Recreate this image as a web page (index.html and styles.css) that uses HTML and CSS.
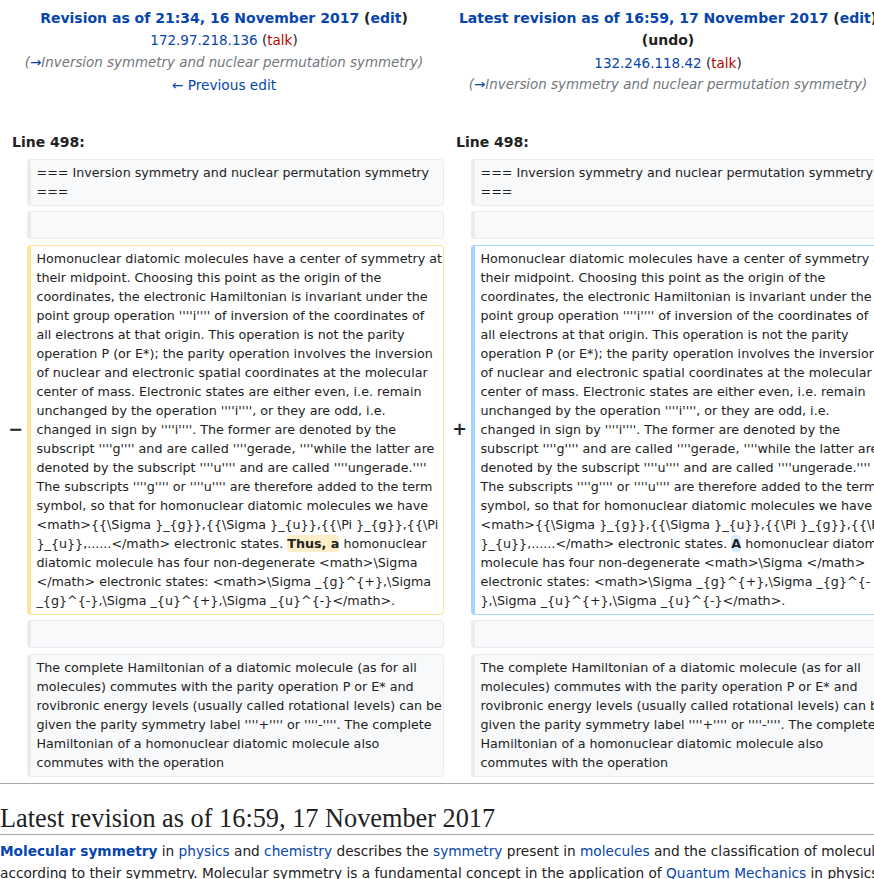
FILE: index.html
```html
<!DOCTYPE html>
<html lang="en">
<head>
<meta charset="utf-8">
<title>Molecular symmetry: Difference between revisions</title>
<link rel="stylesheet" href="styles.css">
</head>
<body>
<div class="page">
  <div class="diff">
    <div class="title">
      <div class="t1"><strong><a href="#">Revision as of 21:34, 16 November 2017</a> <span class="tool">(<a href="#">edit</a>)</span></strong></div>
      <div class="t2"><a href="#">172.97.218.136</a> <span class="paren">(<a class="new" href="#">talk</a>)</span></div>
      <div class="t3"><span class="comment">(<a href="#" class="arrow">→</a>Inversion symmetry and nuclear permutation symmetry)</span></div>
      <div class="t4"><a href="#">← Previous edit</a></div>
    </div>
    <div class="title">
      <div class="t1"><strong><a href="#">Latest revision as of 16:59, 17 November 2017</a> <span class="tool">(<a href="#">edit</a>)</span> <span class="tool">(<a href="#" class="undo">undo</a>)</span></strong></div>
      <div class="t2"><a href="#">132.246.118.42</a> <span class="paren">(<a class="new" href="#">talk</a>)</span></div>
      <div class="t3"><span class="comment">(<a href="#" class="arrow">→</a>Inversion symmetry and nuclear permutation symmetry)</span></div>
    </div>

    <div class="lineno">Line 498:</div>
    <div class="lineno">Line 498:</div>

    <div class="marker"></div>
    <div class="line context">=== Inversion symmetry and nuclear permutation symmetry<br>===</div>
    <div class="marker"></div>
    <div class="line context">=== Inversion symmetry and nuclear permutation symmetry<br>===</div>

    <div class="marker"></div>
    <div class="line context empty"></div>
    <div class="marker"></div>
    <div class="line context empty"></div>

    <div class="marker">−</div>
    <div class="line deleted">Homonuclear diatomic molecules have a center of symmetry at<br>their midpoint. Choosing this point as the origin of the<br>coordinates, the electronic Hamiltonian is invariant under the<br>point group operation ''''i'''' of inversion of the coordinates of<br>all electrons at that origin. This operation is not the parity<br>operation P (or E*); the parity operation involves the inversion<br>of nuclear and electronic spatial coordinates at the molecular<br>center of mass. Electronic states are either even, i.e. remain<br>unchanged by the operation ''''i'''', or they are odd, i.e.<br>changed in sign by ''''i''''. The former are denoted by the<br>subscript ''''g'''' and are called ''''gerade, ''''while the latter are<br>denoted by the subscript ''''u'''' and are called ''''ungerade.''''<br>The subscripts ''''g'''' or ''''u'''' are therefore added to the term<br>symbol, so that for homonuclear diatomic molecules we have<br>&lt;math&gt;{{\Sigma }_{g}},{{\Sigma }_{u}},{{\Pi }_{g}},{{\Pi<br>}_{u}},......&lt;/math&gt; electronic states. <span class="diffchange">Thus, a</span> homonuclear<br>diatomic molecule has four non-degenerate &lt;math&gt;\Sigma<br>&lt;/math&gt; electronic states: &lt;math&gt;\Sigma _{g}^{+},\Sigma<br>_{g}^{-},\Sigma _{u}^{+},\Sigma _{u}^{-}&lt;/math&gt;.</div>
    <div class="marker">+</div>
    <div class="line added">Homonuclear diatomic molecules have a center of symmetry at<br>their midpoint. Choosing this point as the origin of the<br>coordinates, the electronic Hamiltonian is invariant under the<br>point group operation ''''i'''' of inversion of the coordinates of<br>all electrons at that origin. This operation is not the parity<br>operation P (or E*); the parity operation involves the inversion<br>of nuclear and electronic spatial coordinates at the molecular<br>center of mass. Electronic states are either even, i.e. remain<br>unchanged by the operation ''''i'''', or they are odd, i.e.<br>changed in sign by ''''i''''. The former are denoted by the<br>subscript ''''g'''' and are called ''''gerade, ''''while the latter are<br>denoted by the subscript ''''u'''' and are called ''''ungerade.''''<br>The subscripts ''''g'''' or ''''u'''' are therefore added to the term<br>symbol, so that for homonuclear diatomic molecules we have<br>&lt;math&gt;{{\Sigma }_{g}},{{\Sigma }_{u}},{{\Pi }_{g}},{{\Pi<br>}_{u}},......&lt;/math&gt; electronic states. <span class="diffchange">A</span> homonuclear diatomic<br>molecule has four non-degenerate &lt;math&gt;\Sigma &lt;/math&gt;<br>electronic states: &lt;math&gt;\Sigma _{g}^{+},\Sigma _{g}^{-<br>},\Sigma _{u}^{+},\Sigma _{u}^{-}&lt;/math&gt;.</div>

    <div class="marker"></div>
    <div class="line context empty"></div>
    <div class="marker"></div>
    <div class="line context empty"></div>

    <div class="marker"></div>
    <div class="line context">The complete Hamiltonian of a diatomic molecule (as for all<br>molecules) commutes with the parity operation P or E* and<br>rovibronic energy levels (usually called rotational levels) can be<br>given the parity symmetry label ''''+'''' or ''''-''''. The complete<br>Hamiltonian of a homonuclear diatomic molecule also<br>commutes with the operation</div>
    <div class="marker"></div>
    <div class="line context">The complete Hamiltonian of a diatomic molecule (as for all<br>molecules) commutes with the parity operation P or E* and<br>rovibronic energy levels (usually called rotational levels) can be<br>given the parity symmetry label ''''+'''' or ''''-''''. The complete<br>Hamiltonian of a homonuclear diatomic molecule also<br>commutes with the operation</div>
  </div>

  <hr class="diff-hr">

  <h2 class="current-title">Latest revision as of 16:59, 17 November 2017</h2>
  <p class="lead"><b><a href="#">Molecular symmetry</a></b> in <a href="#">physics</a> and <a href="#">chemistry</a> describes the <a href="#">symmetry</a> present in <a href="#">molecules</a> and the classification of molecules according to their symmetry. Molecular symmetry is a fundamental concept in the application of <a href="#">Quantum Mechanics</a> in physics and chemistry, for example it can be used to predict or explain many of a molecule's properties, such as its dipole moment and its allowed spectroscopic transitions, without doing the exact rigorous calculations.</p>
</div>
</body>
</html>
```
FILE: styles.css
```css
html, body {
  margin: 0;
  padding: 0;
  overflow: hidden;
  background: #ffffff;
}

body {
  font-family: "DejaVu Sans", sans-serif;
  font-size: 14px;
  line-height: 1.6;
  color: #222222;
}

.page {
  width: 892px;
}

a {
  color: #0645ad;
  text-decoration: none;
}

a.new {
  color: #ba0000;
}

.diff {
  display: grid;
  grid-template-columns: 19px 417px 19px 417px;
  column-gap: 4px;
  row-gap: 5.5px;
  padding: 4px 0 0 4px;
}

.title {
  grid-column: span 2;
  text-align: center;
  padding: 3px 0 28.5px;
  line-height: 22.4px;
}

.t2 {
  font-size: 13.5px;
}

.t3 {
  font-size: 13.4px;
}

.t4 {
  font-size: 13.7px;
}

.tool {
  color: #222222;
}

.paren {
  color: #222222;
}

a.undo {
  color: #222222;
}

.comment {
  font-style: italic;
  color: #72777d;
}

.lineno {
  grid-column: span 2;
  font-weight: bold;
  padding: 0 0 0 8px;
}

.marker {
  text-align: right;
  font-weight: bold;
  font-size: 17.5px;
  line-height: 1.2;
  align-self: center;
}

.line {
  font-size: 12.7px;
  line-height: 19px;
  padding: 3.5px 6px 3.5px 5.5px;
  border-style: solid;
  border-width: 1px 1px 1px 4px;
  border-radius: 4px;
  white-space: nowrap;
}

.line.empty {
  min-height: 19px;
}

.context {
  background: #f8f9fa;
  border-color: #eaecf0;
}

.deleted {
  background: #ffffff;
  border-color: #ffe49c;
}

.added {
  background: #ffffff;
  border-color: #a3d3ff;
}

.diffchange {
  font-weight: bold;
  border-radius: 4px;
  padding: 1px 0;
}

.deleted .diffchange {
  background: #feeec8;
}

.added .diffchange {
  background: #d8ecff;
}

.diff-hr {
  margin: 6px 0 0;
  border: 0;
  height: 1px;
  background: #a2a9b1;
}

.current-title {
  font-family: "Liberation Serif", serif;
  font-weight: normal;
  font-size: 26.3px;
  line-height: 1.2;
  margin: 19px 0 0;
  padding: 0;
  border-bottom: 1px solid #a2a9b1;
}

.lead {
  margin: 4.5px 0 0;
  font-size: 13.7px;
  line-height: 22.4px;
}
```
